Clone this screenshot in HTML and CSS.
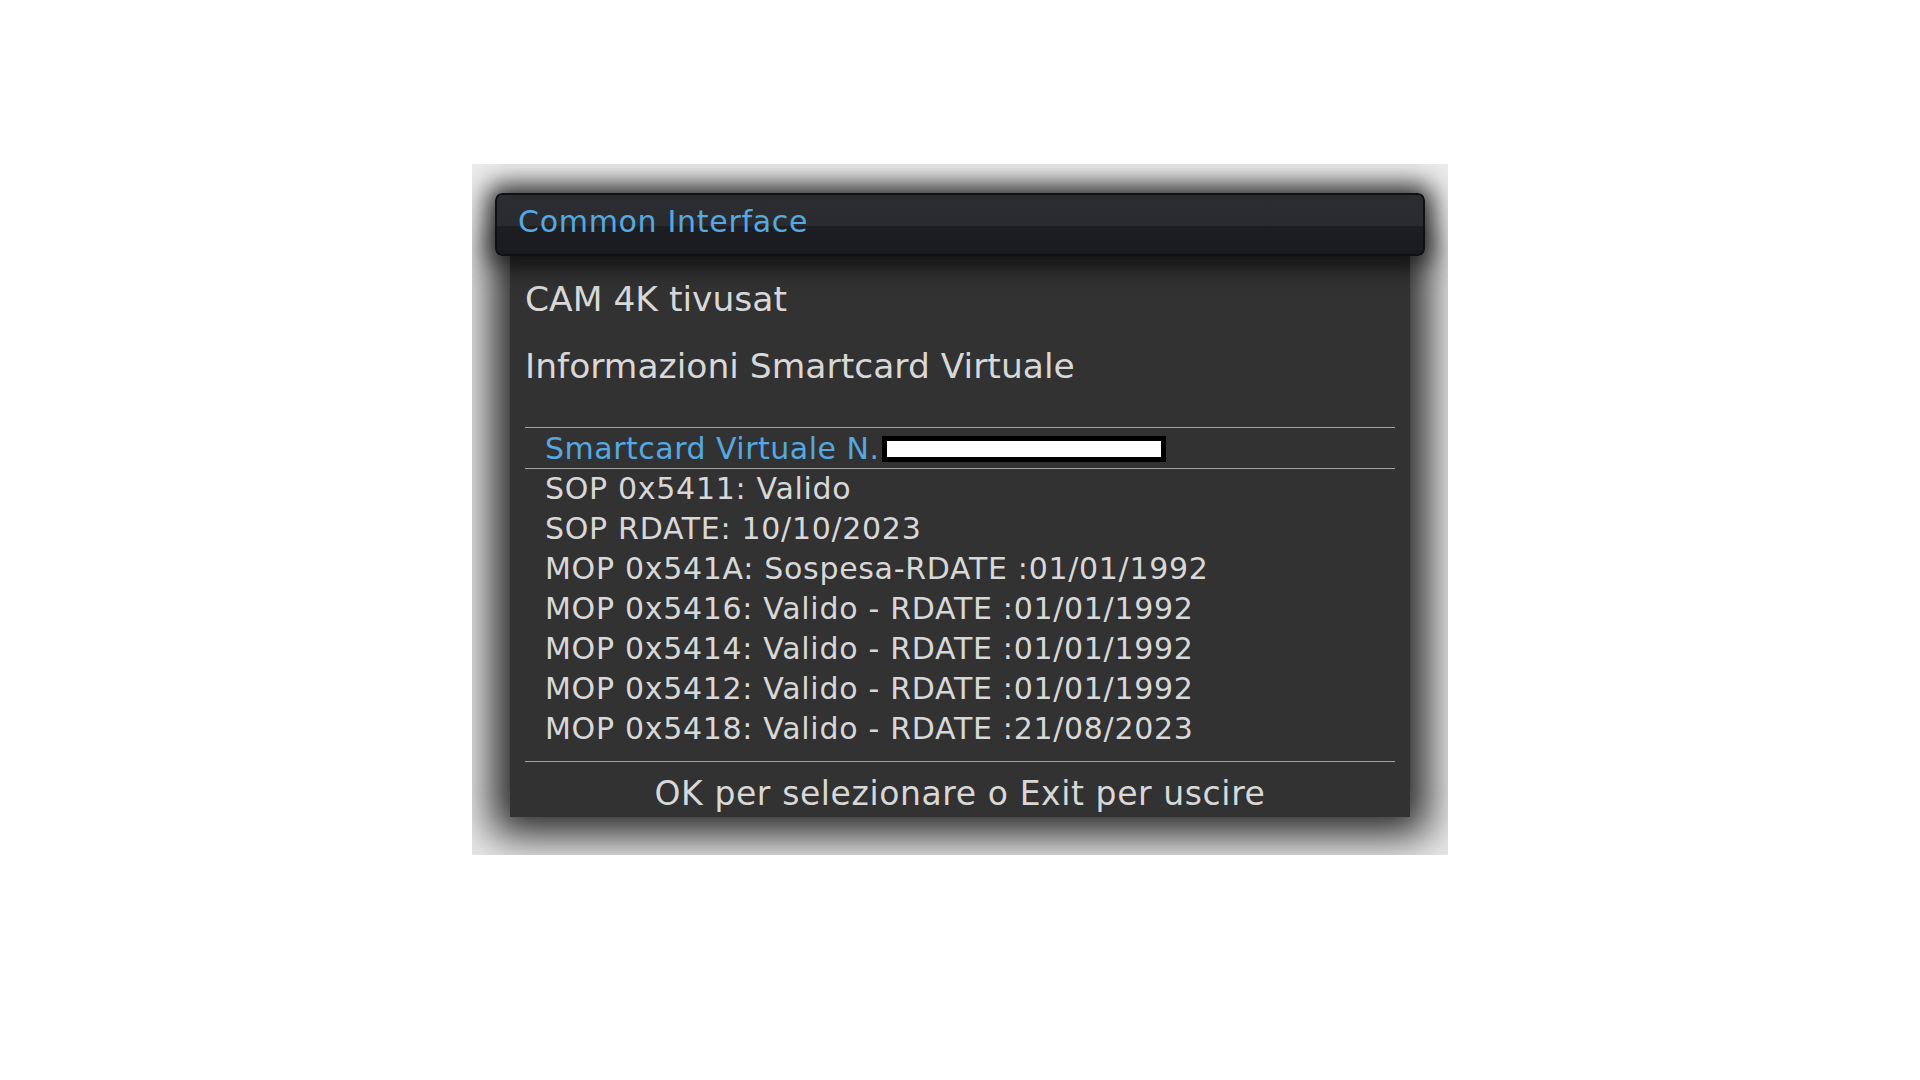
FILE: index.html
```html
<!DOCTYPE html>
<html>
<head>
  <title>Common Interface</title>
  <link rel="stylesheet" href="styles.css">
</head>
<body>
  <div class="frame">
    <div class="titlebar">Common Interface</div>

    <div class="panel">
      <div class="heading">
        <div>CAM 4K tivusat</div>
        <div>Informazioni Smartcard Virtuale</div>
      </div>

      <div class="list">
        <div class="row selected">Smartcard Virtuale N.<span class="masked"></span></div>
        <div class="row">SOP 0x5411: Valido</div>
        <div class="row">SOP RDATE: 10/10/2023</div>
        <div class="row">MOP 0x541A: Sospesa-RDATE :01/01/1992</div>
        <div class="row">MOP 0x5416: Valido - RDATE :01/01/1992</div>
        <div class="row">MOP 0x5414: Valido - RDATE :01/01/1992</div>
        <div class="row">MOP 0x5412: Valido - RDATE :01/01/1992</div>
        <div class="row">MOP 0x5418: Valido - RDATE :21/08/2023</div>
      </div>

      <div class="hint">OK per selezionare o Exit per uscire</div>
    </div>
  </div>
</body>
</html>
```

FILE: styles.css
```css
body {
  margin: 0;
  background: #fff;
  font-family: "DejaVu Sans", Verdana, sans-serif;
}

.frame {
  width: 976px;
  height: 691px;
  margin: 164px 0 0 472px;
  padding: 29px 0 0 23px;
  box-sizing: border-box;
  background: #ececec;
  overflow: hidden;
}

.titlebar {
  position: relative;
  z-index: 2;
  width: 930px;
  height: 63px;
  box-sizing: border-box;
  padding: 0 0 7px 21px;
  border: 2px solid #101012;
  border-radius: 7px;
  background: linear-gradient(#2c2d30 0%, #2a2b2e 52%, #1d1e21 53%, #1a1b1e 100%);
  box-shadow: 0 0 26px 8px rgba(0, 0, 0, 0.85);
  color: #55a8e0;
  font-size: 30px;
  letter-spacing: 0.7px;
  line-height: 54px;
}

.panel {
  position: relative;
  z-index: 1;
  width: 900px;
  height: 561px;
  margin-left: 15px;
  padding: 0 15px;
  box-sizing: border-box;
  background: #323232;
  border-top: 6px solid #3a3a3a;
  box-shadow: 0 0 40px 18px rgba(0, 0, 0, 0.85);
  color: #d8d8d8;
}

.heading {
  padding-top: 4px;
  margin-bottom: 27px;
  font-size: 34.5px;
  line-height: 67px;
}

.list {
  font-size: 30px;
  letter-spacing: 0.7px;
  line-height: 40px;
}

.row {
  padding-left: 20px;
  white-space: nowrap;
}

.row.selected {
  height: 39px;
  line-height: 39px;
  padding-top: 1px;
  border-top: 1px solid #a4a4a4;
  border-bottom: 1px solid #a4a4a4;
  color: #55a8e0;
  letter-spacing: 0.5px;
}

.masked {
  display: inline-block;
  width: 274px;
  height: 16px;
  margin-left: 2px;
  border: 5px solid #000;
  background: #fff;
  vertical-align: -3px;
}

.hint {
  margin-top: 12px;
  border-top: 1px solid #a4a4a4;
  padding-top: 8px;
  text-align: center;
  font-size: 33px;
  letter-spacing: 0.6px;
  line-height: 48px;
}
```
